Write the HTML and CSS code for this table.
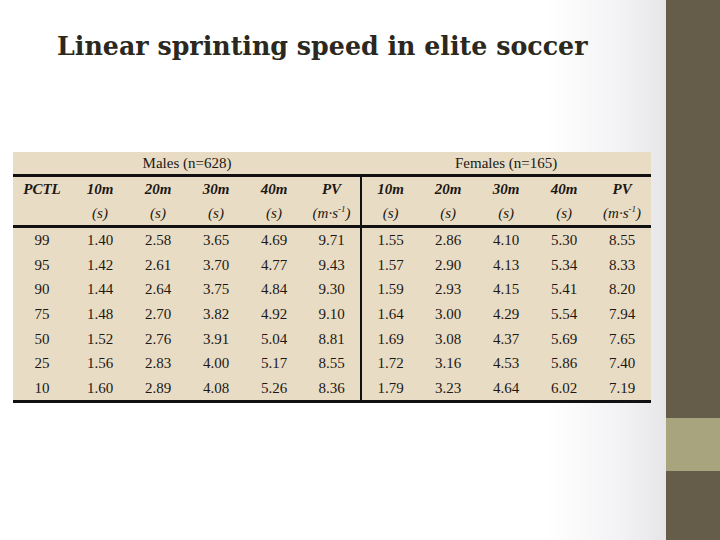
FILE: index.html
```html
<!DOCTYPE html>
<html>
<head>
<meta charset="utf-8">
<link rel="stylesheet" href="styles.css">
</head>
<body>
<div class="slide">
  <main class="content">
    <h1 class="title">Linear sprinting speed in elite soccer</h1>
    <table class="data">
      <colgroup>
        <col><col><col><col><col><col><col><col><col><col><col>
      </colgroup>
      <thead>
        <tr class="group">
          <th colspan="6">Males (n=628)</th>
          <th colspan="5">Females (n=165)</th>
        </tr>
        <tr class="heads">
          <th class="pctl"><b>PCTL</b></th>
          <th><b>10m</b><br>(s)</th>
          <th><b>20m</b><br>(s)</th>
          <th><b>30m</b><br>(s)</th>
          <th><b>40m</b><br>(s)</th>
          <th class="split"><b>PV</b><br>(m·s<sup>-1</sup>)</th>
          <th><b>10m</b><br>(s)</th>
          <th><b>20m</b><br>(s)</th>
          <th><b>30m</b><br>(s)</th>
          <th><b>40m</b><br>(s)</th>
          <th><b>PV</b><br>(m·s<sup>-1</sup>)</th>
        </tr>
      </thead>
      <tbody>
        <tr><td>99</td><td>1.40</td><td>2.58</td><td>3.65</td><td>4.69</td><td class="split">9.71</td><td>1.55</td><td>2.86</td><td>4.10</td><td>5.30</td><td>8.55</td></tr>
        <tr><td>95</td><td>1.42</td><td>2.61</td><td>3.70</td><td>4.77</td><td class="split">9.43</td><td>1.57</td><td>2.90</td><td>4.13</td><td>5.34</td><td>8.33</td></tr>
        <tr><td>90</td><td>1.44</td><td>2.64</td><td>3.75</td><td>4.84</td><td class="split">9.30</td><td>1.59</td><td>2.93</td><td>4.15</td><td>5.41</td><td>8.20</td></tr>
        <tr><td>75</td><td>1.48</td><td>2.70</td><td>3.82</td><td>4.92</td><td class="split">9.10</td><td>1.64</td><td>3.00</td><td>4.29</td><td>5.54</td><td>7.94</td></tr>
        <tr><td>50</td><td>1.52</td><td>2.76</td><td>3.91</td><td>5.04</td><td class="split">8.81</td><td>1.69</td><td>3.08</td><td>4.37</td><td>5.69</td><td>7.65</td></tr>
        <tr><td>25</td><td>1.56</td><td>2.83</td><td>4.00</td><td>5.17</td><td class="split">8.55</td><td>1.72</td><td>3.16</td><td>4.53</td><td>5.86</td><td>7.40</td></tr>
        <tr><td>10</td><td>1.60</td><td>2.89</td><td>4.08</td><td>5.26</td><td class="split">8.36</td><td>1.79</td><td>3.23</td><td>4.64</td><td>6.02</td><td>7.19</td></tr>
      </tbody>
    </table>
  </main>
  <aside class="side">
    <div class="side-top"></div>
    <div class="side-band"></div>
    <div class="side-bottom"></div>
  </aside>
</div>
</body>
</html>
```
FILE: styles.css
```css
html, body {
  margin: 0;
  padding: 0;
}
body {
  width: 720px;
  height: 540px;
  overflow: hidden;
  font-family: "Liberation Serif", "Times New Roman", serif;
  color: #1c1813;
}
.slide {
  display: flex;
  width: 720px;
  height: 540px;
}
.content {
  flex: 1;
  background: linear-gradient(to right, #ffffff 0%, #ffffff 82%, #f3f3f5 93%, #e6e6e9 100%);
  padding: 0 0 0 13px;
  overflow: hidden;
}
.title {
  margin: 30px 0 0 44px;
  font-family: "DejaVu Serif", "Liberation Serif", serif;
  font-size: 25.3px;
  font-weight: bold;
  line-height: 32px;
  white-space: nowrap;
  color: #2b2820;
}
.data {
  margin-top: 90px;
  border-collapse: collapse;
  table-layout: fixed;
  width: 638px;
  background: #e9dcc5;
  font-size: 15px;
}
.data col {
  width: 58px;
}
.data th, .data td {
  padding: 0;
  text-align: center;
}
.group th {
  font-weight: normal;
  height: 22px;
  line-height: 20px;
  vertical-align: middle;
  border-bottom: 3px solid #111;
}
.heads th {
  font-style: italic;
  font-weight: normal;
  height: 47px;
  line-height: 24px;
  vertical-align: top;
  border-bottom: 3px solid #111;
}
.heads b {
  font-weight: bold;
}
.heads sup {
  font-size: 9px;
  line-height: 0;
  vertical-align: 6px;
}
.data td {
  height: 24.6px;
  line-height: 20px;
  vertical-align: middle;
}
.data tbody tr:last-child td {
  border-bottom: 3px solid #111;
}
.split {
  border-right: 2px solid #111;
}
.side {
  width: 54px;
  display: flex;
  flex-direction: column;
}
.side-top {
  height: 418px;
  background: #655d4a;
}
.side-band {
  height: 53px;
  background: #a8a47e;
}
.side-bottom {
  flex: 1;
  background: #655d4a;
}
```
